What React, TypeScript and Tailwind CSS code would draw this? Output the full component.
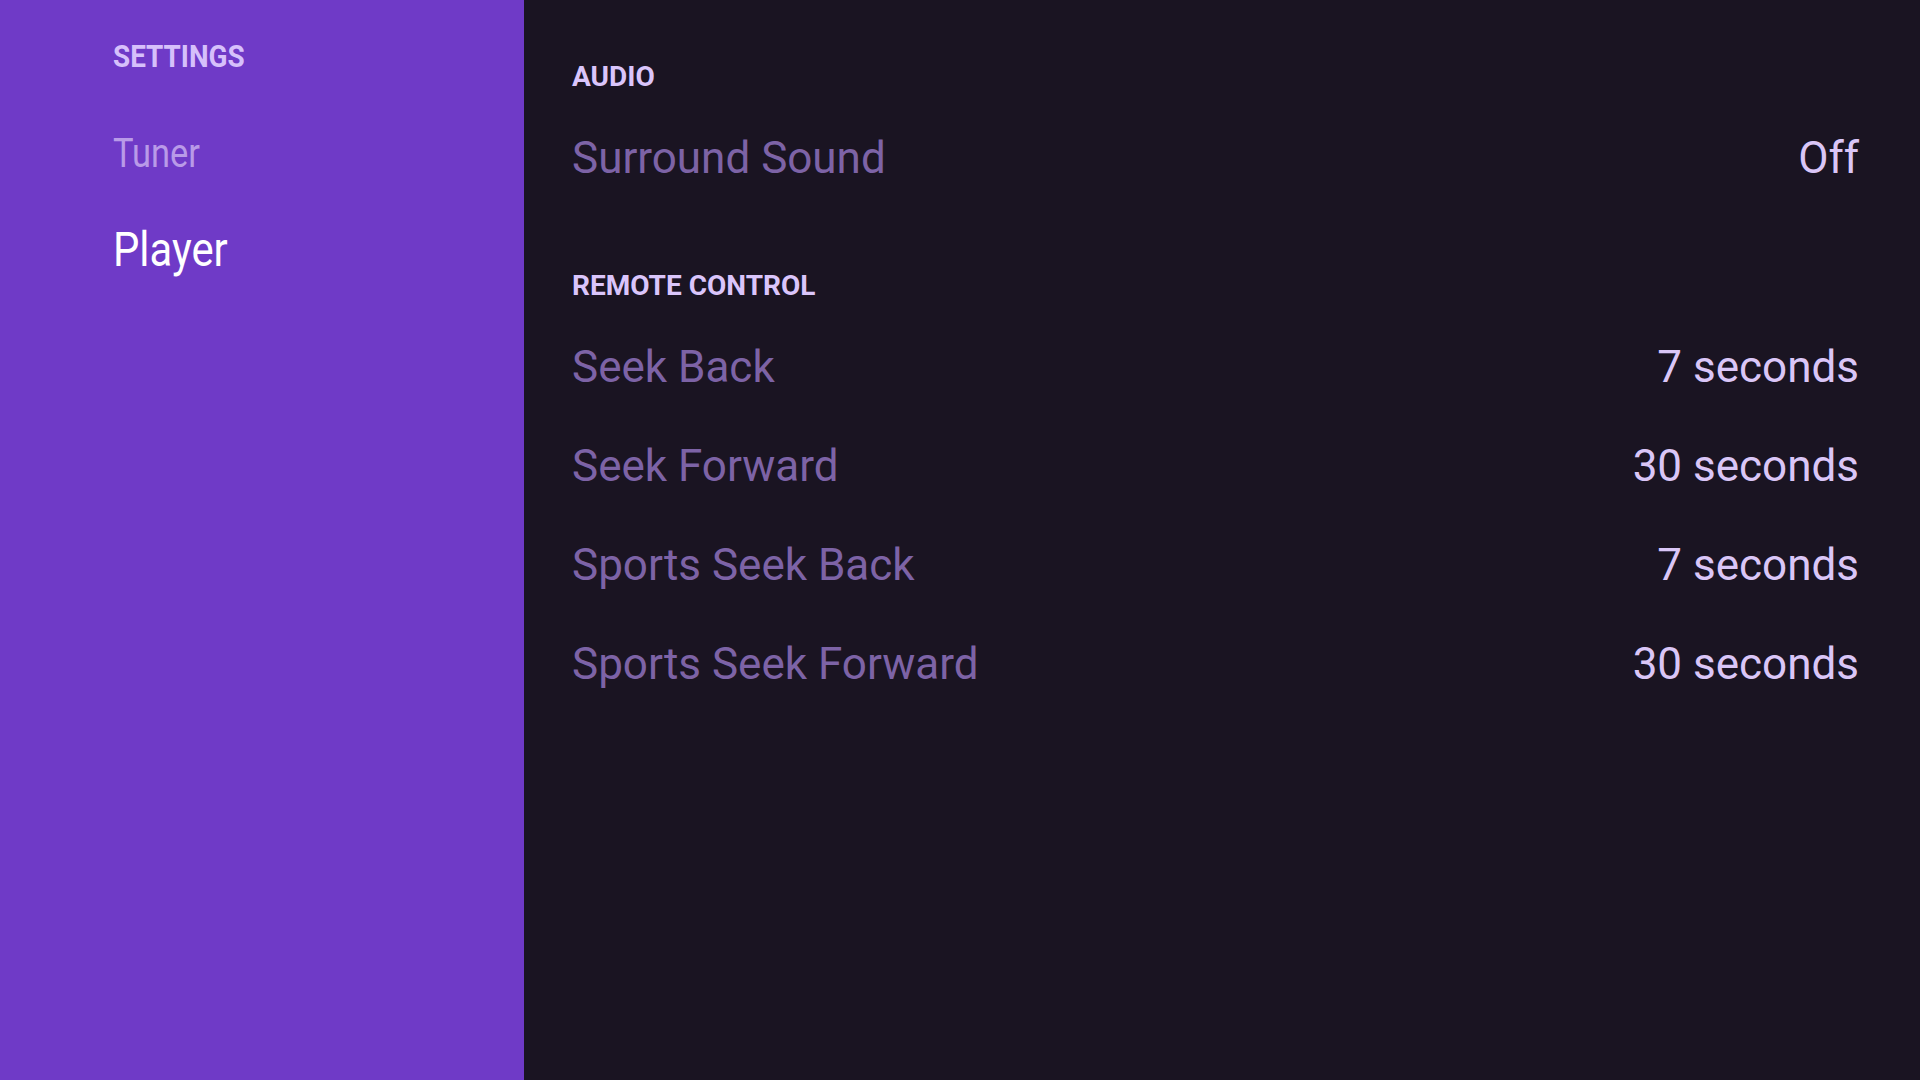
type Row = { label: string; value: string };

type Section = { title: string; rows: Row[] };

const sections: Section[] = [
  {
    title: 'AUDIO',
    rows: [{ label: 'Surround Sound', value: 'Off' }],
  },
  {
    title: 'REMOTE CONTROL',
    rows: [
      { label: 'Seek Back', value: '7 seconds' },
      { label: 'Seek Forward', value: '30 seconds' },
      { label: 'Sports Seek Back', value: '7 seconds' },
      { label: 'Sports Seek Forward', value: '30 seconds' },
    ],
  },
];

const font = "font-['Roboto','Liberation_Sans',sans-serif]";

function Sidebar() {
  return (
    <aside className={`flex w-[524px] shrink-0 flex-col bg-[#6f3ac7] pl-[113px] pt-[40px] ${font}`}>
      {/* condensed look: Roboto squeezed horizontally */}
      <div className="h-[32px]">
        <span className="inline-block origin-left scale-x-[0.87] text-[32px] leading-[32px] font-bold text-[#d6c0fb]">
          SETTINGS
        </span>
      </div>
      <div className="mt-[62px] h-[40px]">
        <span className="inline-block origin-left scale-x-[0.86] text-[40px] leading-[40px] text-[#b99ae8]">
          Tuner
        </span>
      </div>
      <div className="mt-[52px] h-[48px]">
        <span className="inline-block origin-left scale-x-[0.87] text-[48px] leading-[48px] text-white">
          Player
        </span>
      </div>
    </aside>
  );
}

function SettingsSection({ section, first }: { section: Section; first: boolean }) {
  return (
    <section className={first ? '' : 'mt-[65px]'}>
      <h2 className="mb-[17px] text-[28px] leading-[28px] font-bold text-[#dac5fb]">{section.title}</h2>
      {section.rows.map((row) => (
        <div key={row.label} className="flex h-[99px] items-center justify-between text-[44px] leading-[44px]">
          <span className="text-[#7d63a6]">{row.label}</span>
          <span className="text-[#dac6f7]">{row.value}</span>
        </div>
      ))}
    </section>
  );
}

export default function App() {
  return (
    <div className="flex h-[1080px] w-[1920px] overflow-hidden">
      <Sidebar />
      <main className={`flex-1 bg-[#1a1422] pl-[48px] pr-[61px] pt-[63px] ${font}`}>
        {sections.map((s, i) => (
          <SettingsSection key={s.title} section={s} first={i === 0} />
        ))}
      </main>
    </div>
  );
}
